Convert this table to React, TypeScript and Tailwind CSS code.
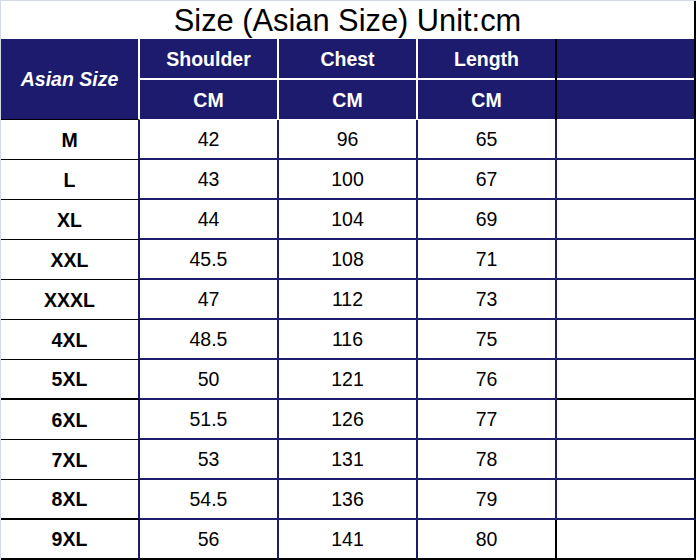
import React from "react"

const rows = [
  ["M", "42", "96", "65"],
  ["L", "43", "100", "67"],
  ["XL", "44", "104", "69"],
  ["XXL", "45.5", "108", "71"],
  ["XXXL", "47", "112", "73"],
  ["4XL", "48.5", "116", "75"],
  ["5XL", "50", "121", "76"],
  ["6XL", "51.5", "126", "77"],
  ["7XL", "53", "131", "78"],
  ["8XL", "54.5", "136", "79"],
  ["9XL", "56", "141", "80"],
]

// rows whose bottom rule is drawn heavier/black in the sheet
const thickLeft = [6, 9, 10]
const blackRight = [6, 10]

function HeaderCol({ label, last, dark }: { label: string; last?: boolean; dark?: boolean }) {
  const right = dark ? "border-r-black" : "border-r-white"
  return (
    <div className={`w-[139px] h-[81px] flex flex-col bg-[#1c1b6d] border-r-2 ${last ? "border-r-black" : right}`}>
      <div className="h-[41px] pt-[3px] border-b-2 border-b-white flex items-center justify-center font-bold text-white">
        {label}
      </div>
      <div className="h-[40px] pt-[2px] border-b border-b-white flex items-center justify-center font-bold text-white">
        {label ? "CM" : ""}
      </div>
    </div>
  )
}

export default function App() {
  return (
    <div
      className="w-[696px] h-[560px] bg-white border-t border-l border-[#d3d9e6] flex flex-col text-[19.5px] leading-none text-black"
      style={{ fontFamily: '"Liberation Sans", Arial, sans-serif' }}
    >
      <div className="h-[38px] border-r-2 border-r-black flex items-center justify-center text-[30.8px] pt-[2px]">
        Size (Asian Size) Unit:cm
      </div>

      <div className="flex">
        <div className="w-[139px] h-[81px] pt-[2px] bg-[#1c1b6d] border-r-2 border-r-white border-b border-b-black flex items-center justify-center font-bold italic text-white">
          Asian Size
        </div>
        <HeaderCol label="Shoulder" />
        <HeaderCol label="Chest" />
        <HeaderCol label="Length" dark />
        <HeaderCol label="" last />
      </div>

      {rows.map((r, i) => {
        const lastRow = i === rows.length - 1
        return (
          <div key={r[0]} className="flex h-[40px]">
            <div
              className={`w-[139px] flex items-center justify-center font-bold border-r-2 border-r-[#1c1b6d] border-b-black ${
                thickLeft.includes(i) ? "border-b-2 pt-[2px]" : "border-b pt-[3px]"
              }`}
            >
              {r[0]}
            </div>
            {r.slice(1).map((v, j) => (
              <div
                key={j}
                className={`w-[139px] pt-[2px] flex items-center justify-center border-r-2 border-b-2 ${
                  j === 2 && lastRow ? "border-r-black" : "border-r-[#1c1b6d]"
                } ${lastRow ? "border-b-black" : "border-b-[#1c1b6d]"}`}
              >
                {v}
              </div>
            ))}
            <div
              className={`w-[139px] border-r-2 border-r-black border-b-2 ${
                blackRight.includes(i) ? "border-b-black" : "border-b-[#1c1b6d]"
              }`}
            />
          </div>
        )
      })}
    </div>
  )
}
